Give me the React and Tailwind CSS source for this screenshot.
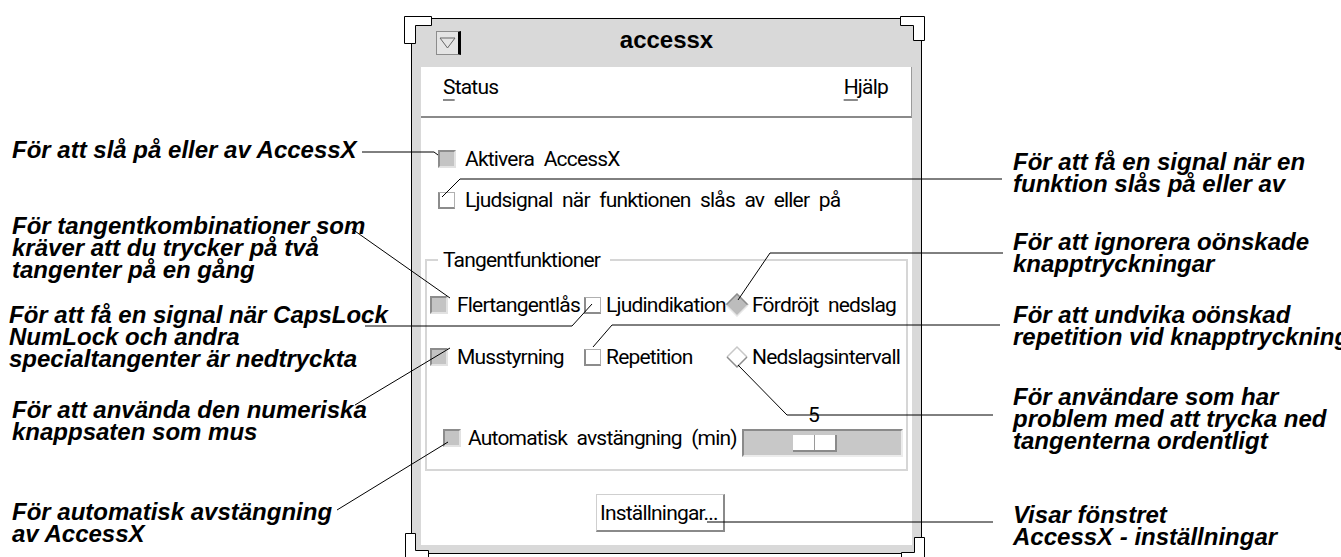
import React from 'react';

const Callout = ({ lines, className = '' }) => (
  <div className={`font-['Liberation_Sans',Arial,sans-serif] font-bold italic text-[24px] leading-[22px] whitespace-nowrap ${className}`}>
    {lines.map((l) => (
      <div key={l}>{l}</div>
    ))}
  </div>
);

const Box = ({ on }) => (
  <span
    className={
      on
        ? 'block w-[18px] h-[18px] shrink-0 bg-[#c4c4c4] border-2 border-t-[#8c8c8c] border-l-[#8c8c8c] border-r-[#e2e2e2] border-b-[#e2e2e2]'
        : 'block w-[17px] h-[17px] shrink-0 bg-white border border-[#b0b0b0] border-l-2 border-b-2 border-l-[#8c8c8c] border-b-[#8c8c8c]'
    }
  />
);

const Diamond = ({ on }) => (
  <svg width="24" height="24" viewBox="0 0 24 24" className="shrink-0">
    {on ? (
      <>
        <polygon points="12,1 23,12 12,23 1,12" fill="#bcbcbc" />
        <polyline points="1,12 12,1 23,12" fill="none" stroke="#8c8c8c" strokeWidth="1.5" />
        <polyline points="1,12 12,23 23,12" fill="none" stroke="#e6e6e6" strokeWidth="1.5" />
      </>
    ) : (
      <>
        <polygon points="12,2 22,12 12,22 2,12" fill="#fff" />
        <polyline points="2,12 12,2 22,12" fill="none" stroke="#c8c8c8" strokeWidth="1.5" />
        <polyline points="2,12 12,22 22,12" fill="none" stroke="#8c8c8c" strokeWidth="1.5" />
      </>
    )}
  </svg>
);

const leaders = [
  '362,152 434,152 438,155',
  '442,197 460,179 1002,179',
  '352,229 450,298',
  '738,300 770,253 1003,253',
  '365,326 572,326 592,304',
  '593,347 612,325 1000,325',
  '355,405 450,348',
  '738,365 787,415 993,415',
  '337,510 448,442',
  '707,522 993,522',
];

const corners = [
  '404.5,16.5 431.5,16.5 431.5,25.5 415.5,25.5 415.5,43.5 404.5,43.5',
  '900.5,16.5 924.5,16.5 924.5,40.5 913.5,40.5 913.5,25.5 900.5,25.5',
  '405.5,533.5 415.5,533.5 415.5,550.5 428.5,550.5 428.5,560 405.5,560',
  '901.5,552.5 914.5,552.5 914.5,537.5 924.5,537.5 924.5,560 901.5,560',
];

export default function App() {
  return (
    <div className="relative w-[1341px] h-[557px] overflow-hidden bg-white text-black">
      <div className="flex">
        {/* left notes */}
        <div className="w-[411px] shrink-0 pl-[12px] flex flex-col">
          <Callout className="mt-[139px]" lines={['För att slå på eller av AccessX']} />
          <Callout
            className="mt-[54px]"
            lines={['För tangentkombinationer som', 'kräver att du trycker på två', 'tangenter på en gång']}
          />
          <Callout
            className="mt-[23px] -ml-[3px]"
            lines={['För att få en signal när CapsLock', 'NumLock och andra', 'specialtangenter är nedtryckta']}
          />
          <Callout className="mt-[29px]" lines={['För att använda den numeriska', 'knappsaten som mus']} />
          <Callout className="mt-[58px]" lines={['För automatisk avstängning', 'av AccessX']} />
        </div>

        {/* window */}
        <div className="w-[511px] h-[536px] mt-[18px] shrink-0 border border-black bg-[#d9d9d9] flex flex-col whitespace-nowrap font-['Roboto',sans-serif] text-[21px] leading-[24px] tracking-[-0.8px] [word-spacing:5px]">
          <div className="h-[48px] grid grid-cols-[1fr_auto_1fr] items-center">
            <div className="pl-[24px]">
              <div className="w-[25px] h-[24px] bg-[#e4e4e4] border border-[#8c8c8c] border-r-[3px] border-r-black">
                <svg width="21" height="22" viewBox="0 0 21 22">
                  <polygon points="3,6 18,6 10.5,16" fill="none" stroke="#666" strokeWidth="1" />
                </svg>
              </div>
            </div>
            <div className="-mt-[7px] font-['Liberation_Sans',Arial,sans-serif] font-bold text-[24px] tracking-normal [word-spacing:0px]">
              accessx
            </div>
            <div />
          </div>

          <div className="mx-[9px] h-[51px] shrink-0 bg-white border-b-2 border-b-[#8a8a8a] border-r border-r-[#9a9a9a] flex justify-between pt-[8px] pl-[22px] pr-[23px]">
            <span>
              <span className="underline decoration-[#8a8a8a] decoration-2 underline-offset-[5px]">S</span>tatus
            </span>
            <span>
              <span className="underline decoration-[#8a8a8a] decoration-2 underline-offset-[5px]">H</span>jälp
            </span>
          </div>

          <div className="mx-[9px] h-[427px] shrink-0 bg-white flex flex-col">
            <div className="mt-[29px] ml-[17px] flex items-center gap-[9px]">
              <Box on />
              <span>Aktivera AccessX</span>
            </div>
            <div className="mt-[17px] ml-[17px] flex items-center gap-[10px]">
              <Box />
              <span>Ljudsignal när funktionen slås av eller på</span>
            </div>

            <fieldset className="mt-[36px] ml-[4px] w-[483px] min-w-0 border-2 border-[#d6d6d6] p-0 m-0">
              <legend className="ml-[11px] pl-[5px] pr-[10px]">Tangentfunktioner</legend>
              <div className="pt-[21px] pb-[12px]">
                <div className="grid grid-cols-[154px_141px_1fr] gap-y-[28px] pl-[3px]">
                  <div className="flex items-center gap-[9px]">
                    <Box on />
                    <span>Flertangentlås</span>
                  </div>
                  <div className="flex items-center gap-[5px]">
                    <Box />
                    <span>Ljudindikation</span>
                  </div>
                  <div className="flex items-center gap-[3px]">
                    <Diamond on />
                    <span>Fördröjt nedslag</span>
                  </div>
                  <div className="flex items-center gap-[9px]">
                    <Box on />
                    <span>Musstyrning</span>
                  </div>
                  <div className="flex items-center gap-[5px]">
                    <Box />
                    <span>Repetition</span>
                  </div>
                  <div className="flex items-center gap-[3px]">
                    <Diamond />
                    <span>Nedslagsintervall</span>
                  </div>
                </div>

                <div className="mt-[36px] flex items-start pl-[16px] pr-[3px]">
                  <div className="mt-[21px] flex items-center gap-[7px]">
                    <Box on />
                    <span>Automatisk avstängning (min)</span>
                  </div>
                  <div className="ml-auto flex flex-col">
                    <div className="pl-[66px] leading-[20px]">5</div>
                    <div className="mt-[4px] w-[161px] h-[28px] bg-[#c8c8c8] border-2 border-t-[#8a8a8a] border-l-[#8a8a8a] border-b-[#ececec] border-r-[#ececec] flex items-center pl-[49px]">
                      <div className="w-[44px] h-[17px] bg-white border-b-2 border-r-2 border-[#8a8a8a] flex">
                        <div className="flex-1 border-r border-r-[#9a9a9a]" />
                        <div className="flex-1" />
                      </div>
                    </div>
                  </div>
                </div>
              </div>
            </fieldset>

            <div className="ml-[175px] mt-[23px] w-[129px] h-[38px] border border-[#cfcfcf] border-b-2 border-r-2 border-b-[#8a8a8a] border-r-[#8a8a8a] flex items-center pl-[3px] [word-spacing:0px]">
              Inställningar...
            </div>
          </div>
        </div>

        {/* right notes */}
        <div className="flex-1 pl-[91px] flex flex-col">
          <Callout className="mt-[151px]" lines={['För att få en signal när en', 'funktion slås på eller av']} />
          <Callout className="mt-[36px]" lines={['För att ignorera oönskade', 'knapptryckningar']} />
          <Callout className="mt-[29px]" lines={['För att undvika oönskad', 'repetition vid knapptryckningar']} />
          <Callout
            className="mt-[38px]"
            lines={['För användare som har', 'problem med att trycka ned', 'tangenterna ordentligt']}
          />
          <Callout className="mt-[52px]" lines={['Visar fönstret', 'AccessX - inställningar']} />
        </div>
      </div>

      {/* corner handles and leader lines */}
      <svg className="absolute inset-0 pointer-events-none" width="1341" height="557">
        {corners.map((p) => (
          <polygon key={p} points={p} fill="#fff" stroke="#000" strokeWidth="1" />
        ))}
        {leaders.map((p) => (
          <polyline key={p} points={p} fill="none" stroke="#000" strokeWidth="1" />
        ))}
      </svg>
    </div>
  );
}
